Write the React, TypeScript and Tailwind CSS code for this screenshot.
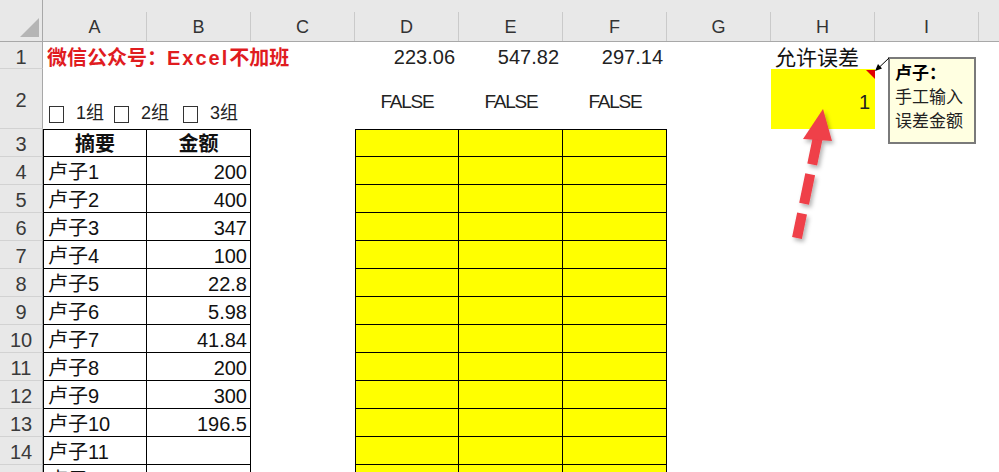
import React from 'react';

const COLS = ['A', 'B', 'C', 'D', 'E', 'F', 'G', 'H', 'I'];

const ROWS = [
  { name: '卢子1', amount: '200' },
  { name: '卢子2', amount: '400' },
  { name: '卢子3', amount: '347' },
  { name: '卢子4', amount: '100' },
  { name: '卢子5', amount: '22.8' },
  { name: '卢子6', amount: '5.98' },
  { name: '卢子7', amount: '41.84' },
  { name: '卢子8', amount: '200' },
  { name: '卢子9', amount: '300' },
  { name: '卢子10', amount: '196.5' },
  { name: '卢子11', amount: '' },
  { name: '卢子12', amount: '' },
];

const rowHead =
  'bg-[#e8e8e8] border-r border-b border-r-[#a8a8a8] border-b-[#d2d2d2] flex items-center justify-center pt-[3px] text-[20px] text-[#3a3a3a]';

function Checkbox({ label, width }: { label: string; width: string }) {
  return (
    <div className={`flex items-end gap-[12px] ${width}`}>
      <span className="block shrink-0 w-[15px] h-[17px] border border-[#333] bg-white" />
      <span className="text-[18px] leading-[19px] text-[#222]">{label}</span>
    </div>
  );
}

export default function App() {
  return (
    <div className="relative w-[999px] h-[472px] overflow-hidden bg-white font-['Liberation_Sans','Noto_Sans_CJK_SC',sans-serif]">
      <div className="grid grid-cols-[43px_repeat(9,104px)_20px] grid-rows-[42px_27px_60px_repeat(13,28px)]">
        {/* column headers */}
        <div className="bg-[#e8e8e8] border-r border-b border-[#a8a8a8] flex items-end justify-end pr-[2px] pb-[3px]">
          <svg width="20" height="20" viewBox="0 0 20 20">
            <polygon points="19,0 19,19 0,19" fill="#b5b5b5" />
          </svg>
        </div>
        {COLS.map((c) => (
          <div key={c} className="bg-[#e8e8e8] border-b border-[#a8a8a8] flex flex-col">
            <div className="h-[14px]" />
            <div className="flex-1 border-r border-[#cacaca] flex items-center justify-center pt-[2px] text-[18px] text-[#333]">
              {c}
            </div>
          </div>
        ))}
        <div className="bg-[#e8e8e8] border-b border-[#a8a8a8]" />

        {/* row 1 */}
        <div className={rowHead}>1</div>
        <div className="col-span-3 flex items-center pl-[4px] pt-[4px] whitespace-nowrap text-[20px] font-bold text-[#e01c1f]">
          微信公众号：<span className="tracking-[2px]">Excel</span>不加班
        </div>
        <div className="flex items-center justify-end pr-[4px] pt-[3px] text-[20px] text-[#222]">223.06</div>
        <div className="flex items-center justify-end pr-[4px] pt-[3px] text-[20px] text-[#222]">547.82</div>
        <div className="flex items-center justify-end pr-[4px] pt-[3px] text-[20px] text-[#222]">297.14</div>
        <div />
        <div className="flex items-center pl-[4px] pt-[4px] whitespace-nowrap text-[21px] text-[#111]">允许误差</div>
        <div />
        <div />

        {/* row 2 */}
        <div className={rowHead}>2</div>
        <div className="col-span-3 flex items-end pl-[6px] pb-[6px]">
          <Checkbox label="1组" width="w-[65px]" />
          <Checkbox label="2组" width="w-[69px]" />
          <Checkbox label="3组" width="w-[69px]" />
        </div>
        {[0, 1, 2].map((i) => (
          <div key={i} className="flex items-center justify-center pt-[6px] text-[19px] tracking-[-1.2px] text-[#222]">
            FALSE
          </div>
        ))}
        <div />
        <div className="bg-[#ffff00] flex items-center justify-end pr-[5px] pt-[6px] text-[20px] text-[#222]">1</div>
        <div />
        <div />

        {/* row 3: table headers */}
        <div className={rowHead}>3</div>
        <div className="border border-black flex items-center justify-center pt-[2px] text-[20px] font-bold text-[#111]">摘要</div>
        <div className="border-t border-r border-b border-black flex items-center justify-center pt-[2px] text-[20px] font-bold text-[#111]">金额</div>
        <div />
        <div className="bg-[#ffff00] border border-black" />
        <div className="bg-[#ffff00] border-t border-r border-b border-black" />
        <div className="bg-[#ffff00] border-t border-r border-b border-black" />
        <div />
        <div />
        <div />
        <div />

        {ROWS.map((r, i) => (
          <React.Fragment key={r.name}>
            <div className={rowHead}>{i + 4}</div>
            <div className="border-l border-r border-b border-black flex items-center pl-[4px] pt-[3px] text-[20px] text-[#111] whitespace-nowrap">
              {r.name}
            </div>
            <div className="border-r border-b border-black flex items-center justify-end pr-[3px] pt-[3px] text-[20px] text-[#111]">
              {r.amount}
            </div>
            <div />
            <div className="bg-[#ffff00] border-l border-r border-b border-black" />
            <div className="bg-[#ffff00] border-r border-b border-black" />
            <div className="bg-[#ffff00] border-r border-b border-black" />
            <div />
            <div />
            <div />
            <div />
          </React.Fragment>
        ))}
      </div>

      {/* comment note */}
      <div className="absolute left-[888px] top-[57px] w-[88px] h-[87px] bg-[#ffffe1] border-2 border-[#7a7a7a] pl-[5px] pt-[3px] text-[17px] leading-[24px] text-[#222]">
        <div className="font-bold text-black">卢子：</div>
        <div>手工输入</div>
        <div>误差金额</div>
      </div>

      <svg className="absolute left-0 top-0 pointer-events-none" width="999" height="472" viewBox="0 0 999 472">
        <defs>
          <filter id="sh" x="-50%" y="-50%" width="200%" height="200%">
            <feDropShadow dx="2" dy="3" stdDeviation="2" floodColor="#000" floodOpacity="0.3" />
          </filter>
        </defs>
        <polygon points="866,70 875,70 875,79" fill="#e00000" />
        <line x1="889" y1="58" x2="879" y2="67.5" stroke="#000" strokeWidth="1" />
        <polygon points="875,71 882,68.4 878,64" fill="#000" />
        <g filter="url(#sh)">
          <line x1="797" y1="238" x2="817.5" y2="139" stroke="#ef3f48" strokeWidth="10" strokeDasharray="25 10 30 10 30" />
          <polygon points="823,109 803,139 832,141" fill="#ef3f48" />
        </g>
      </svg>
    </div>
  );
}
